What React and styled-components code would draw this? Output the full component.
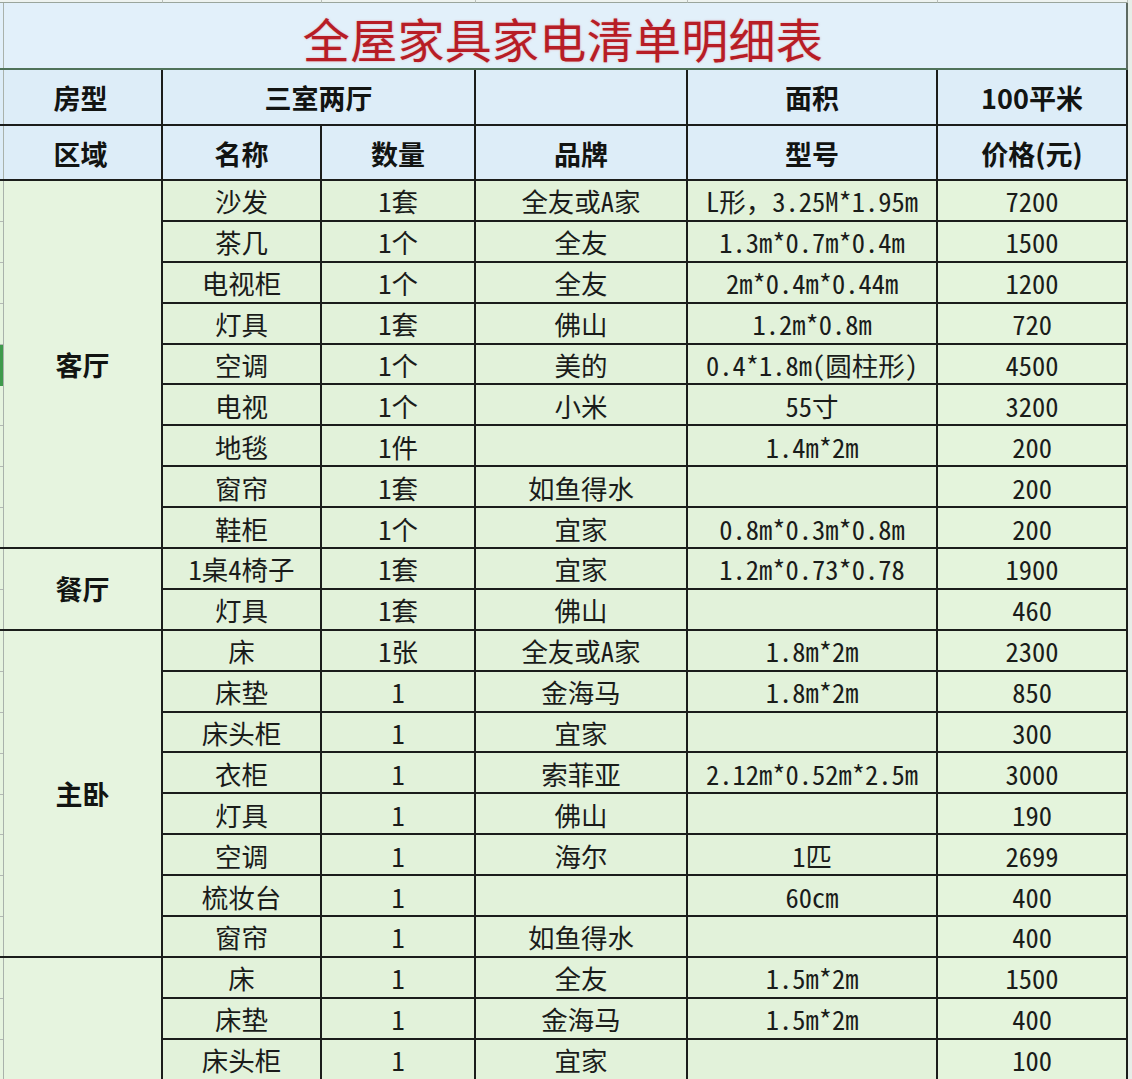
import React from "react";
import styled, { createGlobalStyle, css } from "styled-components";

const COLS = "163px 159px 154px 212px 250px 190px";
const ROW_H = 40.9;
const LINE = "#1b1d1b";

const GlobalStyle = createGlobalStyle`
  html, body { margin: 0; padding: 0; background: #e8efe9; }
  * { box-sizing: border-box; }
`;

const Page = styled.div`
  position: relative;
  width: 1132px;
  height: 1079px;
  overflow: hidden;
  background: #e6eee8;
  padding-right: 4px;
  font-family: "Noto Sans CJK SC", "Noto Sans", sans-serif;
  color: #161816;
`;

const TopStrip = styled.div`
  display: grid;
  grid-template-columns: ${COLS};
  height: 3px;
  background: #eef3f0;
`;

const Tick = styled.div`
  border-right: 1px solid #b9bfba;
  border-bottom: 1px solid #9aa59c;
`;

const Table = styled.div`
  display: grid;
  grid-template-columns: ${COLS};
  grid-template-rows: 67px 56px 55px;
  grid-auto-rows: ${ROW_H}px;
`;

const leftRule = css`
  background-image: linear-gradient(
    to right,
    transparent 3px,
    #a9b2ab 3px,
    #a9b2ab 4px,
    transparent 4px
  );
`;

const cellBase = css`
  display: flex;
  align-items: center;
  justify-content: center;
  border-right: 2px solid ${LINE};
  border-bottom: 2px solid ${LINE};
  white-space: nowrap;
  overflow: hidden;
  ${(p) => p.$first && leftRule}
`;

const Title = styled.div`
  ${cellBase};
  ${leftRule};
  grid-column: 1 / -1;
  overflow: visible;
  background-color: #e2f0fa;
  border-bottom: 2px solid #4f7259;
  border-right: 2px solid #5d6a62;
  padding-top: 5px;
  font-size: 47px;
  line-height: 1.25;
  font-weight: 400;
  color: #b71d26;
  letter-spacing: 0.3px;
  text-shadow: 0 0 2px rgba(230, 90, 100, 0.5);
`;

const HeadCell = styled.div`
  ${cellBase};
  grid-column: span ${(p) => p.$span || 1};
  background-color: #ddedf8;
  font-size: 27px;
  font-weight: 700;
  color: #121412;
  padding-top: 1px;
`;

const Region = styled.div`
  ${cellBase};
  grid-row: span ${(p) => p.$span};
  background-color: #e6f4df;
  background-image: linear-gradient(
      to right,
      transparent 3px,
      #a9b2ab 3px,
      #a9b2ab 4px,
      transparent 4px
    ),
    repeating-linear-gradient(
      to bottom,
      transparent 0,
      transparent ${ROW_H - 1}px,
      #b3b9b4 ${ROW_H - 1}px,
      #b3b9b4 ${ROW_H}px
    );
  background-size: 100% 100%, 3px 100%;
  background-repeat: no-repeat;
  padding-left: 4px;
  font-size: 27px;
  font-weight: 700;
  color: #121412;
`;

const Cell = styled.div`
  ${cellBase};
  background-color: ${(p) => (p.$last ? "#e4f4dc" : "#e2f2da")};
  font-family: "Noto Sans Mono CJK SC", "Noto Sans CJK SC", "DejaVu Sans Mono", monospace;
  font-size: 26.5px;
  font-weight: 400;
  color: #1a1c1a;
  padding-top: 1px;
`;

const SelectMark = styled.div`
  position: absolute;
  left: 0;
  top: 345px;
  width: 3px;
  height: 41px;
  background: #3f9a4c;
`;

const groups = [
  {
    name: "客厅",
    rows: [
      ["沙发", "1套", "全友或A家", "L形，3.25M*1.95m", "7200"],
      ["茶几", "1个", "全友", "1.3m*0.7m*0.4m", "1500"],
      ["电视柜", "1个", "全友", "2m*0.4m*0.44m", "1200"],
      ["灯具", "1套", "佛山", "1.2m*0.8m", "720"],
      ["空调", "1个", "美的", "0.4*1.8m(圆柱形)", "4500"],
      ["电视", "1个", "小米", "55寸", "3200"],
      ["地毯", "1件", "", "1.4m*2m", "200"],
      ["窗帘", "1套", "如鱼得水", "", "200"],
      ["鞋柜", "1个", "宜家", "0.8m*0.3m*0.8m", "200"],
    ],
  },
  {
    name: "餐厅",
    rows: [
      ["1桌4椅子", "1套", "宜家", "1.2m*0.73*0.78", "1900"],
      ["灯具", "1套", "佛山", "", "460"],
    ],
  },
  {
    name: "主卧",
    rows: [
      ["床", "1张", "全友或A家", "1.8m*2m", "2300"],
      ["床垫", "1", "金海马", "1.8m*2m", "850"],
      ["床头柜", "1", "宜家", "", "300"],
      ["衣柜", "1", "索菲亚", "2.12m*0.52m*2.5m", "3000"],
      ["灯具", "1", "佛山", "", "190"],
      ["空调", "1", "海尔", "1匹", "2699"],
      ["梳妆台", "1", "", "60cm", "400"],
      ["窗帘", "1", "如鱼得水", "", "400"],
    ],
  },
  {
    name: "",
    rows: [
      ["床", "1", "全友", "1.5m*2m", "1500"],
      ["床垫", "1", "金海马", "1.5m*2m", "400"],
      ["床头柜", "1", "宜家", "", "100"],
    ],
  },
];

export default function App() {
  return (
    <>
      <GlobalStyle />
      <Page>
        <TopStrip>
          {Array.from({ length: 6 }).map((_, i) => (
            <Tick key={i} />
          ))}
        </TopStrip>
        <Table>
          <Title>全屋家具家电清单明细表</Title>

          <HeadCell $first>房型</HeadCell>
          <HeadCell $span={2}>三室两厅</HeadCell>
          <HeadCell />
          <HeadCell>面积</HeadCell>
          <HeadCell>100平米</HeadCell>

          <HeadCell $first>区域</HeadCell>
          <HeadCell>名称</HeadCell>
          <HeadCell>数量</HeadCell>
          <HeadCell>品牌</HeadCell>
          <HeadCell>型号</HeadCell>
          <HeadCell>价格(元)</HeadCell>

          {groups.map((g, gi) => (
            <React.Fragment key={gi}>
              <Region $span={g.rows.length}>{g.name}</Region>
              {g.rows.map((r, ri) =>
                r.map((v, ci) => (
                  <Cell key={`${ri}-${ci}`} $last={ci === 4}>
                    {v}
                  </Cell>
                ))
              )}
            </React.Fragment>
          ))}
        </Table>
        <SelectMark />
      </Page>
    </>
  );
}
